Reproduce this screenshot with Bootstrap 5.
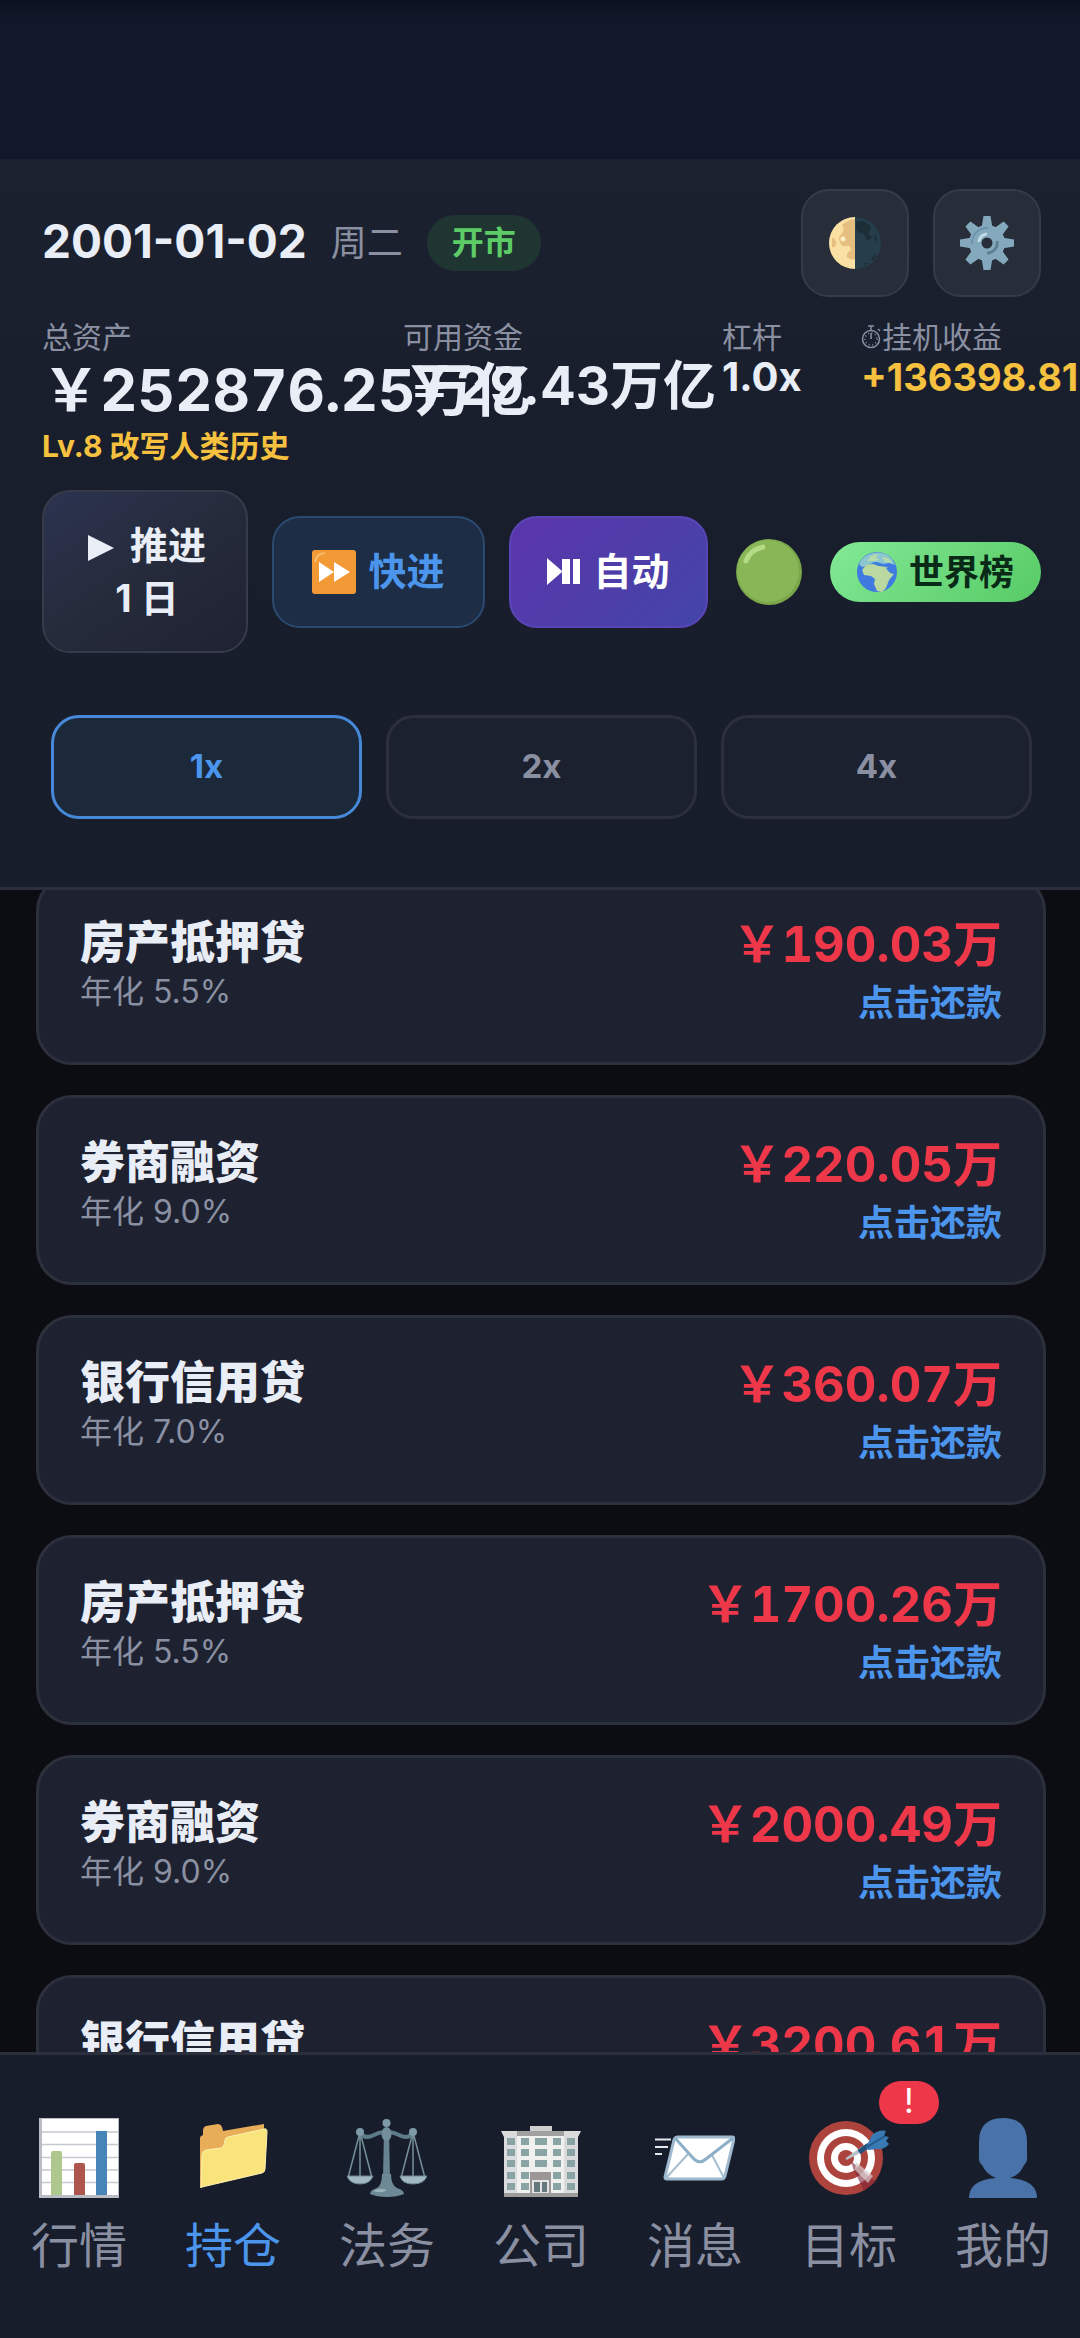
<!DOCTYPE html>
<html lang="zh-CN">
<head>
<meta charset="utf-8">
<meta name="viewport" content="width=device-width, initial-scale=1">
<title>持仓</title>
<link rel="stylesheet" href="https://cdn.jsdelivr.net/npm/bootstrap@5.3.0/dist/css/bootstrap.min.css">
<style>
:root{--ink:#e9edf6;--dim:#8a90a2;--blue:#4c95ec;--red:#ee384a;--gold:#f5c13f;--line:#2c303d}
body{font-family:Inter,"Noto Sans CJK SC",sans-serif;background:#0c0d12;color:var(--ink);line-height:1.2}
svg{display:block;flex:none}
.status-strip{height:159px;background:linear-gradient(#0d1220 0,#12182b 24px,#12182b 100%)}
.top-panel{background:linear-gradient(#1c2130,#191e2d 40%,#181d2b);border-bottom:3px solid var(--line);padding:30px 39px 68px 42px}
.fs-date{font-size:46px;line-height:54px;font-weight:700;padding-bottom:4px}
.fs-36{font-size:36px;line-height:44px}
.dim{color:var(--dim)}
.open-pill{background:#1f3531;color:#5dcc66;font-size:32px;line-height:56px;font-weight:700;padding:0 25px;border-radius:28px}
.tool-btn{width:108px;height:108px;border-radius:28px;border:2px solid #363b49;background:#282d3a;padding:0}
.stats{display:grid;grid-template-columns:361px 319px 139px 1fr;margin-top:22px;height:171px;white-space:nowrap}
.stats dt{font-weight:400;font-size:30px;line-height:36px;color:var(--dim)}
.stats dd{margin:0;font-weight:700}
.val-xl,.debt-sum{font-variant-numeric:tabular-nums}
.val-xl{font-size:58px;line-height:70px}
.val-lg{font-size:53px;line-height:62px}
.val-md{font-size:40px;line-height:44px}
.stats .level{font-size:30px;line-height:42px;color:var(--gold)}
.stats .gold{color:var(--gold);font-size:38px}
.act{border:2px solid;border-radius:28px;font-weight:700;font-size:38px;line-height:53px;color:var(--ink);display:flex;align-items:center;justify-content:center;gap:12px;height:112px;padding:0}
.act-day{width:206px;height:163px;padding-left:4px;background:linear-gradient(145deg,#2b3350,#262b3b 50%,#1e2232);border-color:#363b49}
.act-fast{width:213px;background:#1c2d45;border-color:#2b4a70;color:var(--blue)}
.act-auto{width:199px;background:linear-gradient(135deg,#5b35ab,#4345a9);border-color:#5a45b8;color:#fff}
.world{background:linear-gradient(135deg,#82e996,#57ca65);color:#0a2a18;font-size:35px;line-height:60px;font-weight:700;border:0;border-radius:30px;width:211px;padding:0;gap:12px}
.speed-row{display:grid;grid-template-columns:repeat(3,1fr);gap:24px;padding:0 9px;margin-top:62px}
.speed{height:104px;border-radius:28px;border:3px solid var(--line);background:#1c2130;color:var(--dim);font-weight:700;font-size:33px}
.speed.on{border-color:#4689d8;background:#1b293a;color:var(--blue)}
.debts{min-height:0}
.debt-list{margin:-15px 34px 0 36px;display:grid;gap:30px}
.debt{height:190px;border:3px solid var(--line);border-radius:36px;background:#1d2130;padding:37px 41px 0}
.debt-name{font-size:45px;line-height:56px;font-weight:900}
.debt-rate{font-size:32px;line-height:42px;color:var(--dim)}
.debt-sum{font-size:49px;line-height:60px;font-weight:700;color:var(--red)}
.repay{font-size:36px;line-height:56px;font-weight:700;color:var(--blue);text-decoration:none}
.tabs{background:#181d2b;border-top:3px solid var(--line);height:286px;padding:63px 0 0 2px}
.tab{flex:1 1 0;color:var(--dim);font-size:48px;line-height:58px;text-decoration:none;gap:19px}
.tab.on{color:var(--blue)}
.alert-dot{position:absolute;top:-37px;left:70px;width:60px;height:43px;border-radius:22px;background:var(--red);color:#fff;font-size:34px;line-height:40px;text-align:center}
</style>
</head>
<body>
<div class="d-flex flex-column vh-100 overflow-hidden">
  <div class="status-strip flex-shrink-0"></div>
  <header class="top-panel flex-shrink-0 overflow-hidden">
    <div class="d-flex align-items-center">
      <time class="fs-date" datetime="2001-01-02">2001-01-02</time>
      <span class="fs-36 dim ms-4">周二</span>
      <span class="open-pill ms-4">开市</span>
      <div class="d-flex ms-auto gap-4">
        <button class="tool-btn d-flex align-items-center justify-content-center" type="button" aria-label="主题">
          <svg width="54" height="54" viewBox="0 0 54 54"><circle cx="27" cy="27" r="26" fill="#263d4b"/><path d="M27 1a26 26 0 0 0 0 52z" fill="#fbe0a4"/><path d="M27 3q-8 1-13 6 3 4 0 8-5 5-2 9 1 5 6 4 4-2 5 4-5 3-4 7 4 4 8 2zM4 22q4 0 4 5t-4 4z" fill="#e6be80"/><circle cx="15" cy="23" r="2.500" fill="#fff0c4"/><path d="M28 6q8-3 13 3 4 4-1 8l4 5-5 2-3-6q-7-1-8-5zM47 18l3 8-4-3zM44 42l3-4 1 3-4 4zM36 47h4l-3 3z" fill="#1c2e36"/></svg>
        </button>
        <button class="tool-btn d-flex align-items-center justify-content-center" type="button" aria-label="设置">
          <svg width="54" height="54" viewBox="0 0 54 54"><g fill="#84a9bd"><path id="c" d="M23.500 0h7l2 12h-11zM21.500 42h11l-2 12h-7z"/><use href="#c" transform="rotate(45 27 27)"/><use href="#c" transform="rotate(90 27 27)"/><use href="#c" transform="rotate(135 27 27)"/><circle cx="27" cy="27" r="18"/></g><path d="M12 28a15 15 0 0 1 16-16" fill="none" stroke="#6c95aa" stroke-width="2"/><path d="M19 26a8 8 0 0 1 8-8" fill="none" stroke="#c2dbe6" stroke-width="3"/><path d="M37 25a10 10 0 0 1-10 12" fill="none" stroke="#5d8193" stroke-width="3"/><circle cx="27" cy="27" r="5.500" fill="#282d3a"/></svg>
        </button>
      </div>
    </div>
    <dl class="stats mb-0">
      <div><dt>总资产</dt><dd class="val-xl">￥252876.25万亿</dd><dd class="level">Lv.8 改写人类历史</dd></div>
      <div><dt>可用资金</dt><dd class="val-lg">￥29.43万亿</dd></div>
      <div><dt>杠杆</dt><dd class="val-md">1.0x</dd></div>
      <div><dt class="d-flex align-items-center"><svg width="21" height="26" viewBox="0 0 21 26" fill="none" stroke="#8a90a2" stroke-width="1.500"><circle cx="10" cy="15" r="8.500"/><path d="M7 2h6M10 2v4M17 5l2 2M10 9v6"/><circle cx="10" cy="15" r="6" stroke-dasharray="1 2.500"/></svg>挂机收益</dt><dd class="val-md gold">+136398.81</dd></div>
    </dl>
    <div class="d-flex align-items-center gap-4">
      <button class="act act-day" type="button"><span><svg class="d-inline-block me-3" width="26" height="26" viewBox="0 0 26 26"><path d="M0 0l26 13L0 26z" fill="#e9edf6"/></svg>推进<br>1 日</span></button>
      <button class="act act-fast" type="button"><svg width="44" height="44" viewBox="0 0 44 44"><rect width="44" height="44" rx="3" fill="#f29a35"/><path d="M3 12q1-8 10-9" fill="none" stroke="#f9bd72" stroke-width="2"/><path d="M7 12l15 10L7 32zM22 12l16 10-16 10z" fill="#fff"/></svg>快进</button>
      <button class="act act-auto" type="button"><svg width="34" height="28" viewBox="0 0 34 28"><path d="M0 0l15 13V1h8v25h-8V14L0 27zM26 1h7v25h-7z" fill="#fff"/></svg>自动</button>
      <svg class="mx-1" width="66" height="66" viewBox="0 0 66 66"><circle cx="33" cy="33" r="33" fill="#7ba64a"/><circle cx="32" cy="32" r="31" fill="#89b657"/><path d="M10 22Q14 11 27 8" fill="none" stroke="#b3db86" stroke-width="5" stroke-linecap="round"/></svg>
      <button class="world d-flex align-items-center justify-content-center" type="button"><svg width="40" height="40" viewBox="0 0 40 40"><circle cx="20" cy="20" r="20" fill="#3f7ae0"/><path d="M2 12Q6 3 16 1q12-2 19 6l3 6-6-2-6 1-9-2-5 3-7 2z" fill="#8cc7cf"/><path d="M5 18l4-5 7-1 6 2 8 1 3 6 4 1-5 6-3 8-4 4-5-1-3-7 1-5-4-3-7-1z" fill="#b9d9a0"/><path d="M10 9l4-5 7-2-2 4 4 2-6 1zM25 5l6 1 4 5-7-1z" fill="#b5dca8"/><path d="M15 11l5-1 6 2-4 2zM28 15l4 5 3-1" fill="#3b7fdc"/></svg>世界榜</button>
    </div>
    <div class="speed-row">
      <button class="speed on" type="button">1x</button>
      <button class="speed" type="button">2x</button>
      <button class="speed" type="button">4x</button>
    </div>
  </header>

  <main class="debts flex-grow-1 overflow-hidden">
    <div class="debt-list">
      <article class="debt d-flex justify-content-between"><div><div class="debt-name">房产抵押贷</div><div class="debt-rate">年化 5.5%</div></div><div class="text-end"><div class="debt-sum">￥190.03万</div><a class="repay" href="#">点击还款</a></div></article>
      <article class="debt d-flex justify-content-between"><div><div class="debt-name">券商融资</div><div class="debt-rate">年化 9.0%</div></div><div class="text-end"><div class="debt-sum">￥220.05万</div><a class="repay" href="#">点击还款</a></div></article>
      <article class="debt d-flex justify-content-between"><div><div class="debt-name">银行信用贷</div><div class="debt-rate">年化 7.0%</div></div><div class="text-end"><div class="debt-sum">￥360.07万</div><a class="repay" href="#">点击还款</a></div></article>
      <article class="debt d-flex justify-content-between"><div><div class="debt-name">房产抵押贷</div><div class="debt-rate">年化 5.5%</div></div><div class="text-end"><div class="debt-sum">￥1700.26万</div><a class="repay" href="#">点击还款</a></div></article>
      <article class="debt d-flex justify-content-between"><div><div class="debt-name">券商融资</div><div class="debt-rate">年化 9.0%</div></div><div class="text-end"><div class="debt-sum">￥2000.49万</div><a class="repay" href="#">点击还款</a></div></article>
      <article class="debt d-flex justify-content-between"><div><div class="debt-name">银行信用贷</div><div class="debt-rate">年化 7.0%</div></div><div class="text-end"><div class="debt-sum">￥3200.61万</div><a class="repay" href="#">点击还款</a></div></article>
    </div>
  </main>

  <nav class="tabs d-flex flex-shrink-0">
    <a class="tab d-flex flex-column align-items-center" href="#"><svg width="80" height="80" viewBox="0 0 80 80"><path d="M0 0h80v80H0z" fill="#b9bcc3"/><path d="M3 1h76v76H3z" fill="#fff"/><path d="M3 14h76M3 26.500h76M3 39.500h76M3 52h76M3 64.500h76" stroke="#c6c9d0" stroke-width="1.500"/><path d="M12 77V35q0-2 2-2h7q2 0 2 2v42z" fill="#aec78c"/><path d="M35 77V47q0-2 2-2h7q2 0 2 2v30z" fill="#ae564d"/><path d="M57 77V13h11v64z" fill="#4784b8"/></svg>行情</a>
    <a class="tab on d-flex flex-column align-items-center" href="#" aria-current="page"><svg width="80" height="80" viewBox="0 0 80 80"><path d="M7 70V20q0-2 3-3v-4q0-4 3-5l12-2q4 0 5 7l41-7v7l3 2z" fill="#e8ad59"/><path d="M8 70l1-33q0-4 4-5l15-2q3 0 4-8 0-2 3-3l36-8q3-1 3 3l-2 37q0 3-3 4L9 69z" fill="#f9e47c" stroke="#fdf1b4"/></svg>持仓</a>
    <a class="tab d-flex flex-column align-items-center" href="#"><svg width="80" height="80" viewBox="0 0 80 80" fill="none"><path d="M13 14L1 60M13 14v46M13 14l12 46M66 14L54 60M66 14v46M66 14l12 46" stroke="#75909b" stroke-width="1.500"/><path d="M13 14q4 8 14 3t12-1q3-4 13 1t14-3" stroke="#5d7b88" stroke-width="4"/><path d="M37 12h5l1 48H36z" fill="#67838f"/><circle cx="39.500" cy="5" r="4" fill="#7e9aa6"/><ellipse cx="39.500" cy="16" rx="5" ry="7" fill="#718e9a"/><circle cx="13" cy="14" r="4" fill="#7e9aa6"/><circle cx="66" cy="14" r="4" fill="#7e9aa6"/><path d="M0 58h26q-3 8-13 8T0 58zM53 58h27q-3 8-14 8t-13-8z" fill="#a2b9c2" stroke="#6c8995"/><path d="M35 56h9q0 11 6 14 7 2 7 6-7 3-17 3t-17-3q0-4 7-6 5-3 5-14z" fill="#6c8995"/><path d="M26 73q7-4 14-1-5 4-14 1z" fill="#9ab0ba"/></svg>法务</a>
    <a class="tab d-flex flex-column align-items-center" href="#"><svg width="80" height="80" viewBox="0 0 80 80"><path d="M0 13h80l-3 6v60H3V19z" fill="#dadbdc"/><path d="M16 18h47v60H16z" fill="#f0f0ef"/><path d="M16 13h47v5H16z" fill="#a19fa0"/><path d="M29 8h22v5H29z" fill="#cfcfd0"/><path d="M3 75h74v4H3z" fill="#9d9a9a"/><g fill="#8aa3a5"><path id="f" d="M6 20h8v7H6zM20 20h8v7h-8zM34 20h12v7H34zM52 20h8v7h-8zM66 20h8v7h-8z"/><use href="#f" y="11"/><use href="#f" y="22"/><use href="#f" y="34"/><use href="#f" y="45"/></g><path d="M29 54h21v21H29z" fill="#9c9796"/><path d="M31 62h17v13H31z" fill="#e2e3e3"/><path d="M33 64h6v10h-6zM41 64h5v10h-5z" fill="#66787c"/></svg>公司</a>
    <a class="tab d-flex flex-column align-items-center" href="#"><svg width="80" height="80" viewBox="0 0 80 80"><path d="M0 21.500h16M0 29h13M0 36h7" stroke="#e3e8ed" stroke-width="2"/><path d="M23 19h54q2 0 2 2l-9 37q-1 3-3 3H12q-2 0-2-2l9-37q1-3 4-3z" fill="#fff" stroke="#9fb9cf" stroke-width="3"/><path d="M11 60l22-24M69 60L57 37" stroke="#a5bed0" stroke-width="2"/><path d="M20 20l18 20q6 7 13 1l27-21" fill="none" stroke="#8eafc8" stroke-width="3"/></svg>消息</a>
    <a class="tab d-flex flex-column align-items-center" href="#"><span class="position-relative"><svg width="80" height="80" viewBox="0 0 80 80"><circle cx="37" cy="40" r="37" fill="#ad433d"/><circle cx="37" cy="40" r="29" fill="#fff"/><circle cx="37" cy="40" r="22" fill="#ad433d"/><circle cx="37" cy="40" r="15" fill="#fff"/><circle cx="37" cy="40" r="8" fill="#ad433d"/><path d="M42 43l25 21-12 9-11-23z" fill="#7d2338" opacity=".6"/><path d="M47 44l17 14-5 7-13-13z" fill="#d8cfd0" opacity=".7"/><path d="M37 41l20-14 2 3z" fill="#b7c2ca" stroke="#b7c2ca" stroke-width="2"/><path d="M50 34l10-7" stroke="#254f7b" stroke-width="5"/><path d="M57 29l6-12q7-6 14-4l-2 5 5 1-3 4 3 3q-4 5-10 5l-11 1z" fill="#397ab5"/><path d="M58 29l18-11" stroke="#245889" stroke-width="2"/></svg><span class="alert-dot">!</span></span>目标</a>
    <a class="tab d-flex flex-column align-items-center" href="#"><svg width="80" height="80" viewBox="0 0 80 80"><path d="M40 0q24 0 24 24v12q1 8-3 11-4 10-14 13 27 2 27 20H6q0-18 27-20-10-4-14-13-4-3-3-11V24Q16 0 40 0z" fill="#4872a8"/></svg>我的</a>
  </nav>
</div>
<script src="https://cdn.jsdelivr.net/npm/bootstrap@5.3.0/dist/js/bootstrap.bundle.min.js"></script>
</body>
</html>
